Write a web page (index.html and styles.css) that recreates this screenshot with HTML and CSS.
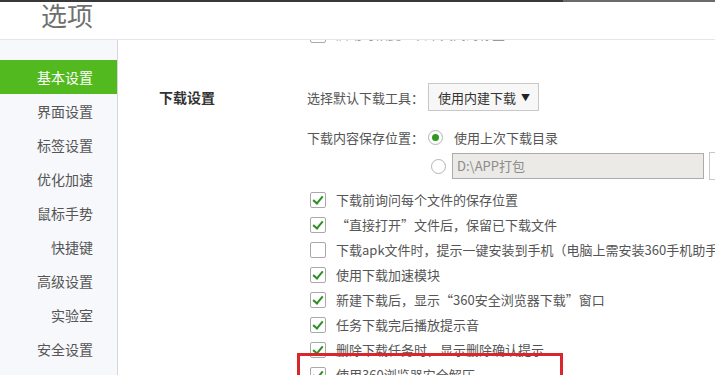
FILE: index.html
```html
<!DOCTYPE html>
<html lang="zh-CN">
<head>
    <meta charset="UTF-8">
    <title>选项</title>
    <link rel="stylesheet" href="styles.css">
</head>
<body>
    <div class="topbar"><span class="topbar-dark"></span><span class="topbar-light"></span></div>
    <div class="header">
        <h1 class="title">选项</h1>
    </div>
    <div class="main">
        <ul class="sidebar">
            <li class="nav-item active">基本设置</li>
            <li class="nav-item">界面设置</li>
            <li class="nav-item">标签设置</li>
            <li class="nav-item">优化加速</li>
            <li class="nav-item">鼠标手势</li>
            <li class="nav-item">快捷键</li>
            <li class="nav-item">高级设置</li>
            <li class="nav-item">实验室</li>
            <li class="nav-item">安全设置</li>
        </ul>

        <div class="content">
            <div class="prev-row">
                <span class="checkbox"></span>
                <span class="prev-text">启动时恢复上次未关闭的标签</span>
            </div>

            <div class="section">
                <div class="section-label">下载设置</div>
                <div class="section-body">
                    <div class="opt-row">
                        <span class="opt-label">选择默认下载工具：</span>
                        <span class="select">使用内建下载 <span class="caret">▼</span></span>
                    </div>
                    <div class="opt-row radio-row">
                        <span class="opt-label">下载内容保存位置：</span>
                        <span class="radio checked"></span>
                        <span class="radio-text">使用上次下载目录</span>
                    </div>
                    <div class="opt-row path-row">
                        <span class="radio"></span>
                        <span class="path-input">D:\APP打包</span>
                        <span class="change-btn">更改</span>
                    </div>

                    <div class="checks">
                        <label class="check-row"><span class="checkbox on"></span>下载前询问每个文件的保存位置</label>
                        <label class="check-row"><span class="checkbox on"></span>“直接打开”文件后，保留已下载文件</label>
                        <label class="check-row"><span class="checkbox"></span>下载apk文件时，提示一键安装到手机（电脑上需安装360手机助手）</label>
                        <label class="check-row"><span class="checkbox on"></span>使用下载加速模块</label>
                        <label class="check-row"><span class="checkbox on"></span>新建下载后，显示“360安全浏览器下载”窗口</label>
                        <label class="check-row"><span class="checkbox on"></span>任务下载完后播放提示音</label>
                        <label class="check-row"><span class="checkbox on"></span>删除下载任务时，显示删除确认提示</label>
                        <label class="check-row"><span class="checkbox on"></span>使用360浏览器安全解压</label>
                    </div>
                </div>
            </div>

            <div class="highlight"></div>
        </div>
    </div>
</body>
</html>
```

FILE: styles.css
```css
html, body {
    margin: 0;
    padding: 0;
    height: 100%;
    overflow: hidden;
}

body {
    font-family: "Noto Sans CJK SC", "Liberation Sans", sans-serif;
    background-color: #fff;
    color: #555;
    font-size: 13px;
}

.topbar {
    display: flex;
    height: 2px;
}

.topbar-dark {
    width: 563px;
    background-color: #393939;
}

.topbar-light {
    flex: 1;
    background-color: #6a6a6a;
}

.header {
    height: 37px;
    border-bottom: 1px solid #e6e6e6;
    overflow: hidden;
}

.title {
    margin: 0;
    padding-left: 41px;
    font-size: 26px;
    font-weight: normal;
    line-height: 26px;
    color: #707070;
}

.main {
    display: flex;
    height: calc(100% - 40px);
}

.sidebar {
    list-style: none;
    margin: 0;
    padding: 20px 0 0;
    width: 117px;
    flex-shrink: 0;
    background-color: #f6f8fb;
    border-right: 1px solid #d4d6d9;
}

.nav-item {
    height: 34px;
    line-height: 34px;
    padding-right: 24px;
    text-align: right;
    font-size: 14px;
    color: #555;
}

.nav-item.active {
    background-color: #52b91e;
    color: #fff;
}

.content {
    position: relative;
    flex: 1;
    overflow: hidden;
}

/* tail of the previous section, scrolled almost out of view */
.prev-row {
    display: flex;
    align-items: flex-end;
    gap: 10px;
    height: 3px;
    overflow: hidden;
    padding-left: 192px;
}

.prev-text {
    line-height: 19px;
    color: #999;
}

.section {
    display: flex;
    margin-top: 40px;
}

.section-label {
    width: 148px;
    flex-shrink: 0;
    padding-left: 41px;
    line-height: 28px;
    font-size: 14px;
    font-weight: bold;
    color: #333;
}

.section-body {
    flex: 1;
    min-width: 0;
}

.opt-row {
    display: flex;
    align-items: center;
    white-space: nowrap;
    height: 28px;
}

.opt-label {
    width: 121px;
    flex-shrink: 0;
}

.select {
    display: flex;
    align-items: center;
    gap: 5px;
    height: 26px;
    padding: 0 8px 0 9px;
    border: 1px solid #c8c8c8;
    background-color: #f7f7f7;
    font-size: 13px;
    color: #333;
}

.caret {
    font-size: 9px;
    color: #222;
}

.radio-row {
    margin-top: 12px;
}

.radio {
    width: 13px;
    height: 13px;
    border: 1px solid #b4b4b4;
    border-radius: 50%;
    background-color: #fff;
    flex-shrink: 0;
    position: relative;
}

.radio.checked::after {
    content: "";
    position: absolute;
    left: 3px;
    top: 3px;
    width: 7px;
    height: 7px;
    border-radius: 50%;
    background-color: #2f9a1e;
}

.radio-text {
    margin-left: 11px;
}

.path-row {
    height: 30px;
    padding-left: 124px;
}

.path-input {
    width: 246px;
    height: 24px;
    line-height: 24px;
    margin-left: 6px;
    padding-left: 4px;
    border: 1px solid #acacac;
    background-color: #ebeae6;
    color: #8c8c8c;
    flex-shrink: 0;
}

.change-btn {
    margin-left: 5px;
    height: 26px;
    line-height: 26px;
    padding: 0 14px;
    border: 1px solid #c8c8c8;
    background-color: #fff;
    color: #333;
}

.checks {
    margin-top: 6px;
}

.check-row {
    display: flex;
    align-items: center;
    gap: 10px;
    height: 25px;
    padding-left: 3px;
    white-space: nowrap;
}

.checkbox {
    position: relative;
    width: 14px;
    height: 14px;
    border: 1px solid #a9a9a9;
    border-radius: 2px;
    background-color: #fff;
    flex-shrink: 0;
}

.checkbox.on::after {
    content: "";
    position: absolute;
    left: 4px;
    top: 1px;
    width: 4px;
    height: 8px;
    border: solid #2c9021;
    border-width: 0 2px 2px 0;
    transform: rotate(40deg);
}

.highlight {
    position: absolute;
    left: 179px;
    top: 313px;
    width: 260px;
    height: 60px;
    border: 3px solid #d9262c;
}
```
